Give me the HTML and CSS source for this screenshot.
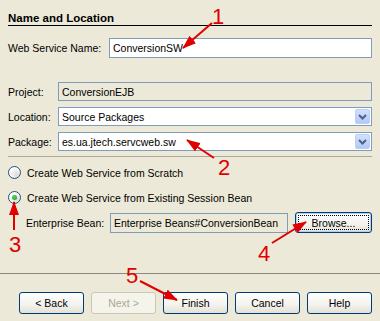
FILE: index.html
```html
<!DOCTYPE html>
<html lang="en">
<head>
    <meta charset="UTF-8">
    <title>New Web Service</title>
    <link rel="stylesheet" href="styles.css">
</head>
<body>
    <div class="wizard">
        <div class="panel">
            <h2 class="section-title">Name and Location</h2>

            <div class="row name-row">
                <span class="label name-label">Web Service Name:</span>
                <div class="field">ConversionSW</div>
            </div>

            <div class="group">
                <div class="row">
                    <span class="label short-label">Project:</span>
                    <div class="field readonly">ConversionEJB</div>
                </div>
                <div class="row">
                    <span class="label short-label">Location:</span>
                    <div class="field combo">
                        <span class="combo-text">Source Packages</span>
                        <span class="combo-btn">
                            <svg width="9" height="6" viewBox="0 0 9 6"><path d="M1 1 L4.5 4.5 L8 1" fill="none" stroke="#4d6185" stroke-width="2"/></svg>
                        </span>
                    </div>
                </div>
                <div class="row">
                    <span class="label short-label">Package:</span>
                    <div class="field combo">
                        <span class="combo-text">es.ua.jtech.servcweb.sw</span>
                        <span class="combo-btn">
                            <svg width="9" height="6" viewBox="0 0 9 6"><path d="M1 1 L4.5 4.5 L8 1" fill="none" stroke="#4d6185" stroke-width="2"/></svg>
                        </span>
                    </div>
                </div>
            </div>

            <div class="separator"></div>

            <div class="radio-row first">
                <span class="radio"></span>
                <span>Create Web Service from Scratch</span>
            </div>
            <div class="radio-row second">
                <span class="radio checked"></span>
                <span>Create Web Service from Existing Session Bean</span>
            </div>

            <div class="row bean-row">
                <span class="label bean-label">Enterprise Bean:</span>
                <div class="field readonly bean-field">Enterprise Beans#ConversionBean</div>
                <button class="btn browse">Browse...</button>
            </div>
        </div>

        <div class="footer">
            <button class="btn">&lt; Back</button>
            <button class="btn" disabled>Next &gt;</button>
            <button class="btn">Finish</button>
            <button class="btn">Cancel</button>
            <button class="btn">Help</button>
        </div>

        <svg class="marks" width="380" height="321" viewBox="0 0 380 321">
            <defs>
                <marker id="head" markerUnits="userSpaceOnUse" markerWidth="14" markerHeight="10" refX="13" refY="5" orient="auto">
                    <path d="M0 0 L14 5 L0 10 z" fill="#e00000"/>
                </marker>
            </defs>
            <g stroke="#e00000" stroke-width="2" marker-end="url(#head)">
                <line x1="212" y1="23" x2="183" y2="48"/>
                <line x1="214" y1="158" x2="187" y2="140"/>
                <line x1="14" y1="230" x2="14" y2="202"/>
                <line x1="272" y1="243" x2="306" y2="222"/>
                <line x1="140" y1="281" x2="177" y2="300"/>
            </g>
            <g class="mark-num" text-anchor="middle">
                <text x="218" y="24">1</text>
                <text x="224" y="175">2</text>
                <text x="15" y="252">3</text>
                <text x="264" y="261">4</text>
                <text x="132" y="283">5</text>
            </g>
        </svg>
    </div>
</body>
</html>
```

FILE: styles.css
```css
body {
    margin: 0;
    background-color: #ece9d8;
    font-family: "Liberation Sans", Arial, sans-serif;
    font-size: 10.5px;
    color: #000;
}

.wizard {
    position: relative;
    width: 380px;
    height: 321px;
    display: flex;
    flex-direction: column;
}

.panel {
    padding: 0 8px;
}

.section-title {
    margin: 0;
    padding-top: 12px;
    font-size: 11.5px;
    line-height: 13px;
    font-weight: bold;
    border-bottom: 1px solid #000;
}

.row {
    display: flex;
    align-items: center;
}

.label {
    flex: none;
}

.name-row {
    margin-top: 12px;
    height: 20px;
}

.name-label {
    width: 101px;
}

.short-label {
    width: 50px;
}

.field {
    flex: 1;
    height: 100%;
    box-sizing: border-box;
    border: 1px solid #7f9db9;
    background-color: #fff;
    padding: 0 3px;
    display: flex;
    align-items: center;
}

.field.readonly {
    background-color: #ece9d8;
}

.group {
    margin-top: 24px;
    display: flex;
    flex-direction: column;
    gap: 6px;
}

.group .row {
    height: 19px;
}

.combo {
    padding-right: 1px;
}

.combo-text {
    flex: 1;
}

.combo-btn {
    width: 15px;
    height: 15px;
    box-sizing: border-box;
    border: 1px solid #b9cdf7;
    border-radius: 2px;
    background: linear-gradient(#d3e0fd, #b4c8f6);
    display: flex;
    align-items: center;
    justify-content: center;
}

.separator {
    margin-top: 5px;
    border-top: 1px solid #aca899;
}

.radio-row {
    display: flex;
    align-items: center;
    gap: 6px;
    height: 15px;
}

.radio-row.first {
    margin-top: 8px;
}

.radio-row.second {
    margin-top: 10px;
}

.radio {
    width: 13px;
    height: 13px;
    box-sizing: border-box;
    border: 1px solid #1c5180;
    border-radius: 50%;
    background: radial-gradient(circle at 70% 70%, #dcdbd3, #fff 70%);
    display: flex;
    align-items: center;
    justify-content: center;
}

.radio.checked::after {
    content: "";
    width: 5px;
    height: 5px;
    border-radius: 50%;
    background: radial-gradient(circle at 40% 40%, #55d055, #21a121);
}

.bean-row {
    margin-top: 7px;
    padding-left: 18px;
    height: 21px;
}

.bean-label {
    width: 84px;
}

.bean-field {
    flex: none;
    width: 178px;
    height: 20px;
    white-space: nowrap;
    overflow: hidden;
}

.btn {
    font-family: inherit;
    font-size: 10.5px;
    color: #000;
    width: 65px;
    height: 22px;
    padding: 0;
    border: 1px solid #003c74;
    border-radius: 3px;
    background: linear-gradient(#fff, #f3f2ec 60%, #e3e0d6);
}

.btn:disabled {
    color: #aca899;
    border-color: #c9c7ba;
    background: #f5f4ea;
}

.browse {
    margin-left: 7px;
    width: 77px;
    height: 21px;
    box-shadow: inset 0 0 0 1px #b5cdf5;
    outline: 1px dotted #000;
    outline-offset: -4px;
}

.footer {
    margin-top: auto;
    margin-bottom: 7px;
    border-top: 1px solid #8c8a80;
    padding: 18px 8px 0;
    display: flex;
    justify-content: flex-end;
    gap: 7px;
}

.marks {
    position: absolute;
    left: 0;
    top: 0;
    pointer-events: none;
}

.mark-num text {
    font-family: "Liberation Sans", Arial, sans-serif;
    font-size: 22px;
    fill: #e00000;
}
```
